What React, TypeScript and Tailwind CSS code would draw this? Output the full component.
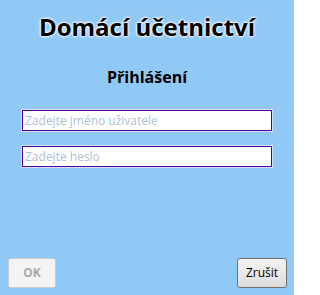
export default function App() {
  return (
    <div
      className="flex h-[295px] w-[294px] flex-col bg-[#90c8f6] px-[7px] pb-[7px]"
      style={{ fontFamily: '"Open Sans", "Noto Sans", sans-serif' }}
    >
      <h1 className="mt-[9px] text-center text-[24px] font-bold leading-[36px] text-black [text-shadow:0_0_3px_#fff,0_0_3px_#fff,0_0_2px_#fff]">
        Domácí účetnictví
      </h1>
      <h2 className="mt-[21px] text-center text-[16px] font-bold leading-[22px] text-black">
        Přihlášení
      </h2>
      <div className="mt-[22px] flex flex-col gap-[15px] px-[15px]">
        <input
          placeholder="Zadejte jméno uživatele"
          className="h-[21px] w-full border border-[#5a0096] bg-white px-[2px] text-[12px] outline outline-1 outline-[#cfe3f8] placeholder:text-[#b0c0d6]"
        />
        <input
          type="password"
          placeholder="Zadejte heslo"
          className="h-[21px] w-full border border-[#5a0096] bg-white px-[2px] text-[12px] outline outline-1 outline-[#cfe3f8] placeholder:text-[#b0c0d6]"
        />
      </div>
      <div className="mt-auto flex items-end justify-between pl-[1px]">
        <button
          disabled
          className="h-[30px] w-[48px] rounded-[3px] border border-[#cccccc] bg-[#f4f4f4] text-[12px] font-bold text-[#a8a8a8]"
        >
          OK
        </button>
        <button className="h-[30px] w-[50px] rounded-[3px] border border-[#707070] bg-gradient-to-b from-[#f3f3f3] to-[#dddddd] text-[12px] text-black">
          Zrušit
        </button>
      </div>
    </div>
  );
}
